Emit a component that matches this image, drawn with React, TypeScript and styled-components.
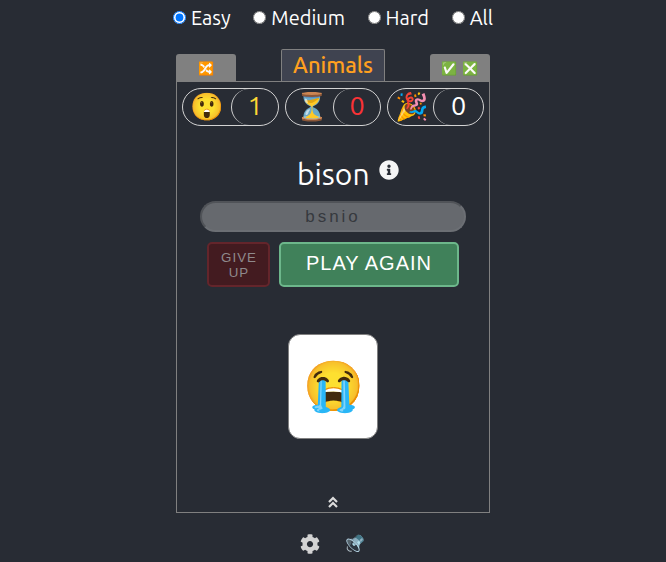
import React from "react";
import styled, { createGlobalStyle } from "styled-components";
import { FaCog, FaInfoCircle } from "react-icons/fa";

const GlobalStyle = createGlobalStyle`
  * { box-sizing: border-box; }
  body {
    margin: 0;
    background: #282c34;
    color: #fff;
    font-family: Ubuntu, "Noto Sans", sans-serif;
    overflow: hidden;
  }
`;

const Page = styled.main`
  display: flex;
  flex-direction: column;
  align-items: center;
  height: 562px;
`;

const Levels = styled.div`
  display: flex;
  gap: 22.6px;
  height: 49px;
  padding-top: 6px;
  font-size: 20px;
  line-height: 24px;
`;

const Level = styled.label`
  display: flex;
  height: 24px;
`;

const Radio = styled.input`
  width: 13px;
  height: 13px;
  margin: 5px 5px 0 0;
`;

const Tabs = styled.div`
  display: flex;
  justify-content: space-between;
  align-items: flex-end;
  width: 314px;
  height: 32px;
`;

const SideTab = styled.button`
  width: 60px;
  height: 27px;
  padding: 2px 1px 0 0;
  border: 0;
  border-radius: 3px 3px 0 0;
  background: #808080;
  color: #fff;
  font: 13px "Liberation Sans", sans-serif;
  word-spacing: 2px;
`;

const Title = styled.h1`
  width: 104px;
  height: 32px;
  margin: 0;
  border: 1px solid #808080;
  border-bottom: 0;
  border-radius: 2px 2px 0 0;
  background: #3f4350;
  color: #ffa01f;
  font-size: 22px;
  font-weight: 500;
  line-height: 30px;
  text-align: center;
`;

const Board = styled.section`
  display: flex;
  flex-direction: column;
  align-items: center;
  width: 314px;
  height: 432px;
  border: 1px solid #808080;
`;

const Scores = styled.div`
  display: flex;
  gap: 6px;
  width: 302px;
  margin-top: 6px;
`;

const Score = styled.div<{ $width: number }>`
  display: flex;
  width: ${(p) => p.$width}px;
  height: 38px;
  border: 1px solid #d3d3d3;
  border-radius: 19px;
  font-size: 27px;
  line-height: 35px;
`;

const Face = styled.span<{ $inset: number }>`
  flex: 1;
  min-width: 0;
  padding-left: ${(p) => p.$inset}px;
  text-align: left;
`;

const Count = styled.span<{ $color: string; $width: number }>`
  flex: none;
  width: ${(p) => p.$width}px;
  border-left: 1px solid #d3d3d3;
  border-radius: 19px;
  color: ${(p) => p.$color};
  line-height: 33px;
  text-align: center;
`;

const Word = styled.div`
  display: flex;
  justify-content: space-between;
  width: 102px;
  height: 36px;
  margin: 30px 0 0 30px;
  font-size: 30px;
  line-height: 36px;
`;

const InfoIcon = styled(FaInfoCircle)`
  width: 20px;
  height: 20px;
  margin-top: 4px;
  color: #f5f5f5;
`;

const Guess = styled.input`
  width: 266px;
  height: 31px;
  margin-top: 9px;
  padding: 0;
  border: 2px solid;
  border-color: #505358 #6c6f74 #6c6f74 #505358;
  border-radius: 16px;
  background: #66696e;
  color: #36393e;
  font: 17px "Liberation Sans", sans-serif;
  letter-spacing: 3px;
  text-align: center;
`;

const Actions = styled.div`
  display: flex;
  gap: 9px;
  margin-top: 10px;
`;

const ActionButton = styled.button`
  height: 45px;
  padding: 0;
  border: 2px solid;
  border-radius: 5px;
  font-family: "Liberation Sans", sans-serif;
  letter-spacing: 1px;
`;

const GiveUp = styled(ActionButton)`
  width: 63px;
  padding-left: 1px;
  border-color: #64252b;
  background: #431b20;
  color: #8f898c;
  font-size: 13.33px;
  line-height: 15px;
`;

const PlayAgain = styled(ActionButton)`
  width: 180px;
  padding: 0 0 2px;
  border-color: #6db78b;
  background: #40815a;
  color: #fff;
  font-size: 20px;
`;

const Card = styled.div`
  width: 90px;
  height: 105px;
  margin-top: 47px;
  border: 1px solid #808080;
  border-radius: 12px;
  background: #fff;
  font-size: 49px;
  line-height: 100px;
  text-align: center;
`;

const Expand = styled.svg`
  width: 10px;
  height: 12px;
  margin-top: auto;
  margin-bottom: 4px;
  fill: none;
  stroke: #dcdcdc;
  stroke-width: 2.2;
`;

const Footer = styled.footer`
  display: flex;
  align-items: center;
  gap: 19px;
  margin: 19px 0 0 -2px;
`;

const Gear = styled(FaCog)`
  width: 20px;
  height: 20px;
  color: #d3d3d3;
`;

const Speaker = styled.span`
  width: 26px;
  height: 24px;
  font-size: 20px;
  line-height: 20px;
  text-align: center;
  transform: rotate(180deg);
`;

const levels = ["Easy", "Medium", "Hard", "All"];
const scores = [
  { face: "😲", count: 1, color: "#fdd835", width: 97, inset: 7, countWidth: 47 },
  { face: "⏳", count: 0, color: "#f93236", width: 96, inset: 9, countWidth: 47 },
  { face: "🎉", count: 0, color: "#fff", width: 97, inset: 7, countWidth: 50 },
];

export default function App() {
  return (
    <Page>
      <GlobalStyle />
      <Levels>
        {levels.map((name, i) => (
          <Level key={name}>
            <Radio type="radio" name="level" defaultChecked={i === 0} />
            {name}
          </Level>
        ))}
      </Levels>
      <Tabs>
        <SideTab>🔀</SideTab>
        <Title>Animals</Title>
        <SideTab>✅ ❎</SideTab>
      </Tabs>
      <Board>
        <Scores>
          {scores.map((s) => (
            <Score key={s.face} $width={s.width}>
              <Face $inset={s.inset}>{s.face}</Face>
              <Count $color={s.color} $width={s.countWidth}>{s.count}</Count>
            </Score>
          ))}
        </Scores>
        <Word>
          bison <InfoIcon />
        </Word>
        <Guess value="bsnio" readOnly />
        <Actions>
          <GiveUp>GIVE<br />UP</GiveUp>
          <PlayAgain>PLAY AGAIN</PlayAgain>
        </Actions>
        <Card>😭</Card>
        <Expand viewBox="0 0 10 12">
          <path d="M1 6 5 2 9 6M1 11 5 7 9 11" />
        </Expand>
      </Board>
      <Footer>
        <Gear />
        <Speaker>🔉</Speaker>
      </Footer>
    </Page>
  );
}
